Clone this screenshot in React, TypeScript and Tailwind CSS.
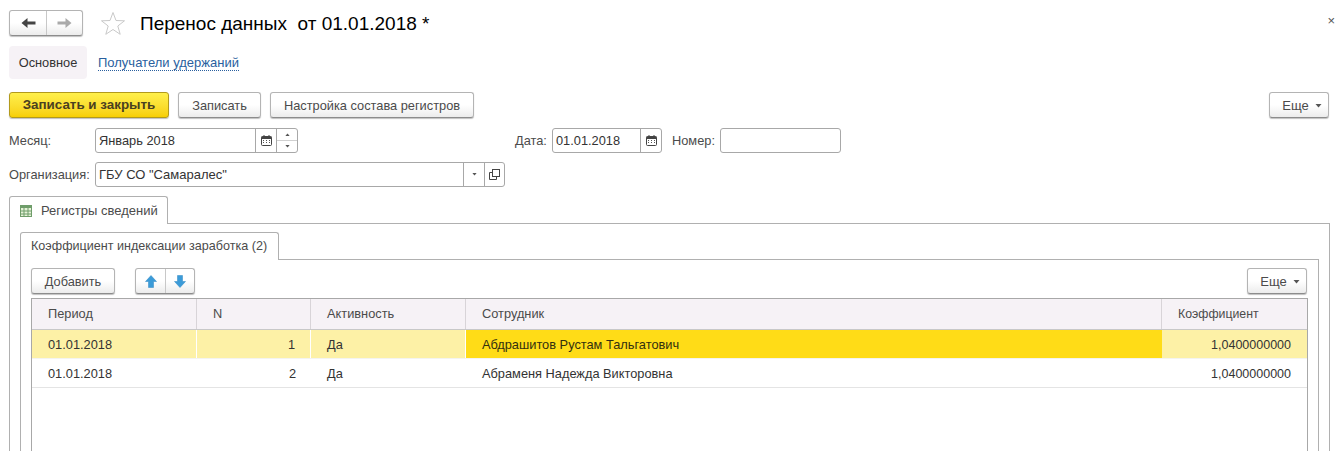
import React from 'react';

const btn = 'h-[26px] rounded-[3px] border border-[#b4b4b4] border-b-[#8c8c8c] bg-gradient-to-b from-white via-white to-[#ececec] shadow-[0_1px_1px_rgba(0,0,0,0.25)] text-[#4b4b4b] flex items-center justify-center';
const field = 'h-[25px] rounded-[3px] border border-[#a8a8a8] bg-white flex items-stretch text-[#333]';

const CalendarIcon = () => (
  <svg width="11" height="11" viewBox="0 0 11 11">
    <rect x="0.5" y="1.5" width="10" height="9" rx="1" fill="#fff" stroke="#444" />
    <rect x="0.5" y="1.5" width="10" height="2.5" fill="#444" />
    <rect x="2.5" y="0" width="1" height="2" fill="#444" />
    <rect x="7.5" y="0" width="1" height="2" fill="#444" />
    <path d="M2 5.5h1M5 5.5h1M8 5.5h1M2 7.5h1M5 7.5h1M8 7.5h1" stroke="#555" />
  </svg>
);

const Caret = ({ up = false, small = false }: { up?: boolean; small?: boolean }) => (
  <svg width={small ? 5 : 7} height={small ? 3 : 4} viewBox="0 0 7 4">
    <path d={up ? 'M0.5 4L3.5 0.5L6.5 4Z' : 'M0.5 0L6.5 0L3.5 3.5Z'} fill="#555" />
  </svg>
);

const MoreButton = ({ className }: { className: string }) => (
  <button className={`${btn} ${className} gap-[6px] pl-[6px] pt-px text-[13px]`}>
    <span>Еще</span>
    <Caret />
  </button>
);

const NavArrow = ({ flip, color }: { flip?: boolean; color: string }) => (
  <svg width="15" height="12" viewBox="0 0 15 12" className={flip ? 'rotate-180' : ''}>
    <path d="M0.5 6L6.5 1V4.5H14.5V7.5H6.5V11Z" fill={color} />
  </svg>
);

const BlueArrow = ({ down }: { down?: boolean }) => (
  <svg width="12" height="13" viewBox="0 0 12 13" className={down ? 'rotate-180' : ''}>
    <path d="M6 0.5L11.5 6.5H8.5V12.5H3.5V6.5H0.5Z" fill="#3b9bd8" stroke="#2f86c2" strokeWidth="0.5" />
  </svg>
);

const columns = [
  { title: 'Период', width: 'w-[165px]' },
  { title: 'N', width: 'w-[114px]' },
  { title: 'Активность', width: 'w-[155px]' },
  { title: 'Сотрудник', width: 'flex-1' },
  { title: 'Коэффициент', width: 'w-[145px] text-[12.3px]' },
];

const rows = [
  { date: '01.01.2018', n: '1', active: 'Да', name: 'Абдрашитов Рустам Тальгатович', k: '1,0400000000', selected: true },
  { date: '01.01.2018', n: '2', active: 'Да', name: 'Абраменя Надежда Викторовна', k: '1,0400000000', selected: false },
];

export default function App() {
  return (
    <div className="relative h-[451px] w-[1335px] overflow-hidden bg-white pl-[9px] pr-[5px] pt-[11px] font-['Liberation_Sans',Arial,sans-serif] text-[12.8px] text-[#4b4b4b]">
      <span className="absolute right-0 top-[14px] text-[13px] leading-none text-[#555]">×</span>

      {/* заголовок */}
      <div className="flex h-[24px] items-center">
        <div className={`${btn} h-[24px] w-[74px] !justify-start`}>
          <span className="flex h-full w-[37px] items-center justify-center border-r border-[#c8c8c8]"><NavArrow color="#444" /></span>
          <span className="flex h-full flex-1 items-center justify-center"><NavArrow flip color="#aaa" /></span>
        </div>
        <svg width="26" height="25" viewBox="0 0 26 25" className="ml-[17px]">
          <path d="M13 1.5L16 9.5L24.5 9.8L17.8 15L20.2 23.3L13 18.5L5.8 23.3L8.2 15L1.5 9.8L10 9.5Z" fill="#fff" stroke="#c9c9c9" />
        </svg>
        <h1 className="ml-[14px] whitespace-pre pt-[3px] text-[19px] text-black">Перенос данных  от 01.01.2018 *</h1>
      </div>

      {/* вкладки формы */}
      <div className="mt-[11px] flex h-[33px] items-center">
        <div className="flex h-full w-[78px] items-center justify-center rounded-[4px] bg-[#f6f2f6] text-[#333]">Основное</div>
        <a className="ml-[11px] mt-px border-b border-dotted border-[#2a5f9e] text-[13px] leading-[14px] text-[#2a5f9e]">Получатели удержаний</a>
      </div>

      {/* командная панель */}
      <div className="mt-[13px] flex h-[26px] items-center">
        <button className="flex h-[26px] w-[160px] items-center justify-center rounded-[3px] border border-[#b29a1c] bg-gradient-to-b from-[#fff04a] to-[#f7cf00] pt-px text-[13.4px] font-bold text-[#4a4020] shadow-[0_1px_1px_rgba(0,0,0,0.25)]">Записать и закрыть</button>
        <button className={`${btn} ml-[9px] w-[83px] pt-px`}>Записать</button>
        <button className={`${btn} ml-[9px] w-[204px] pt-px`}>Настройка состава регистров</button>
        <MoreButton className="ml-auto mr-px w-[60px]" />
      </div>

      {/* реквизиты */}
      <div className="mt-[10px] flex h-[25px] items-center">
        <span className="w-[86px]">Месяц:</span>
        <div className={`${field} w-[203px]`}>
          <span className="flex flex-1 items-center pl-[3px]">Январь 2018</span>
          <span className="flex w-[21px] items-center justify-center border-l border-[#a8a8a8]"><CalendarIcon /></span>
          <span className="flex w-[21px] flex-col border-l border-[#a8a8a8]">
            <span className="flex flex-1 items-center justify-center border-b border-[#d0d0d0]"><Caret up small /></span>
            <span className="flex flex-1 items-center justify-center"><Caret small /></span>
          </span>
        </div>
        <span className="ml-[217px] w-[37px]">Дата:</span>
        <div className={`${field} w-[110px]`}>
          <span className="flex flex-1 items-center pl-[3px]">01.01.2018</span>
          <span className="flex w-[21px] items-center justify-center border-l border-[#a8a8a8]"><CalendarIcon /></span>
        </div>
        <span className="ml-[10px] w-[48px]">Номер:</span>
        <div className={`${field} w-[121px]`} />
      </div>

      <div className="mt-[9px] flex h-[25px] items-center">
        <span className="w-[86px]">Организация:</span>
        <div className={`${field} w-[410px]`}>
          <span className="flex flex-1 items-center pl-[3px] text-[13px]">ГБУ СО "Самаралес"</span>
          <span className="flex w-[21px] items-center justify-center border-l border-[#a8a8a8]"><Caret small /></span>
          <span className="flex w-[20px] items-center justify-center border-l border-[#a8a8a8]">
            <svg width="11" height="11" viewBox="0 0 11 11" fill="none" stroke="#444">
              <rect x="3.5" y="0.5" width="7" height="7" />
              <path d="M3.5 3.5H0.5V10.5H7.5V7.5" />
            </svg>
          </span>
        </div>
      </div>

      {/* внешняя вкладка */}
      <div className="relative z-10 mt-[9px] flex h-[28px] w-[159px] items-center rounded-t-[3px] border border-b-0 border-[#b0b0b0] bg-white pl-[10px]">
        <svg width="12" height="12" viewBox="0 0 12 12">
          <rect x="0.5" y="0.5" width="11" height="11" fill="#e6f2d8" stroke="#6f9d6a" />
          <rect x="0.5" y="0.5" width="11" height="2.5" fill="#6f9d6a" />
          <path d="M4 3v8.5M8 3v8.5M0.5 6h11M0.5 9h11" stroke="#6f9d6a" />
        </svg>
        <span className="ml-[9px] text-[13px]">Регистры сведений</span>
      </div>
      <div className="-mt-px h-[300px] border border-[#b0b0b0] px-[10px] pt-[8px]">
        {/* внутренняя вкладка */}
        <div className="relative z-10 flex h-[28px] w-[259px] items-center rounded-t-[3px] border border-b-0 border-[#b0b0b0] bg-white pl-[10px] text-[12.6px]">
          Коэффициент индексации заработка (2)
        </div>
        <div className="-mt-px h-[300px] border border-[#b0b0b0] px-[10px] pt-[8px]">
          <div className="flex h-[26px] items-center">
            <button className={`${btn} w-[84px] pt-px`}>Добавить</button>
            <div className={`${btn} ml-[20px] w-[60px] !justify-start`}>
              <span className="flex h-full w-[30px] items-center justify-center border-r border-[#c8c8c8]"><BlueArrow /></span>
              <span className="flex h-full flex-1 items-center justify-center"><BlueArrow down /></span>
            </div>
            <MoreButton className="ml-auto mr-px w-[60px]" />
          </div>

          {/* таблица */}
          <div className="mt-[4px] h-[200px] border border-[#a8a8a8]">
            <div className="flex h-[31px] border-b border-[#c8c8c8] bg-[#f6f2f6]">
              {columns.map(col => (
                <div key={col.title} className={`${col.width} flex items-center border-r border-[#d8d4d8] pl-[16px] last:border-r-0`}>{col.title}</div>
              ))}
            </div>
            {rows.map(row => {
              const bg = row.selected ? 'bg-[#fdf1a6] border-[#f4f4f0]' : 'bg-white border-[#e4e4e4]';
              const sep = row.selected ? 'border-r border-white' : '';
              return (
                <div key={row.n} className={`flex h-[29px] border-b text-[#333] ${bg}`}>
                  <div className={`flex w-[165px] items-center pl-[16px] pt-px ${sep}`}>{row.date}</div>
                  <div className={`flex w-[114px] items-center justify-end pr-[15px] pt-px ${sep}`}>{row.n}</div>
                  <div className={`flex w-[155px] items-center pl-[16px] pt-px ${sep}`}>{row.active}</div>
                  <div className={`flex flex-1 items-center pl-[16px] pt-px ${row.selected ? 'bg-[#ffdc17] text-[#33300f]' : ''}`}>{row.name}</div>
                  <div className="flex w-[145px] items-center justify-end pr-[16px] pt-[2px] text-[12.5px]">{row.k}</div>
                </div>
              );
            })}
          </div>
        </div>
      </div>
    </div>
  );
}
